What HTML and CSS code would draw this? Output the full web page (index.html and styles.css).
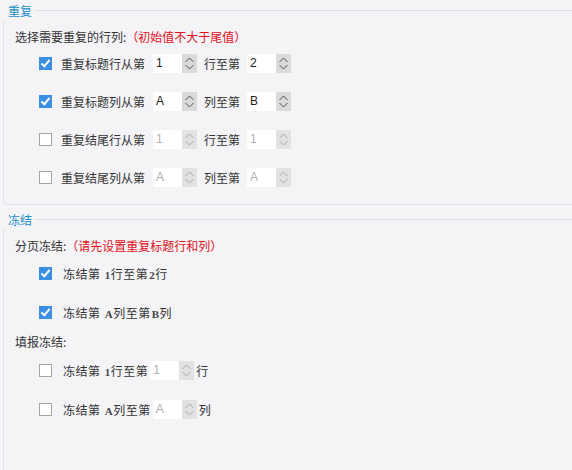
FILE: index.html
```html
<!DOCTYPE html>
<html lang="zh-CN">
<head>
  <meta charset="UTF-8">
  <title>重复与冻结</title>
  <link rel="stylesheet" href="styles.css">
</head>
<body>

<!-- 重复 -->
<div class="section-title"><span>重复</span></div>
<div class="panel panel-repeat">
  <div class="intro">选择需要重复的行列:<span class="note">（初始值不大于尾值）</span></div>

  <div class="row">
    <span class="check on"></span>
    <span class="label">重复标题行从第</span>
    <span class="spin"><span class="val">1</span><span class="arrows"></span></span>
    <span class="label mid">行至第</span>
    <span class="spin"><span class="val">2</span><span class="arrows"></span></span>
  </div>
  <div class="row">
    <span class="check on"></span>
    <span class="label">重复标题列从第</span>
    <span class="spin"><span class="val">A</span><span class="arrows"></span></span>
    <span class="label mid">列至第</span>
    <span class="spin"><span class="val">B</span><span class="arrows"></span></span>
  </div>
  <div class="row">
    <span class="check"></span>
    <span class="label">重复结尾行从第</span>
    <span class="spin off"><span class="val">1</span><span class="arrows"></span></span>
    <span class="label mid">行至第</span>
    <span class="spin off"><span class="val">1</span><span class="arrows"></span></span>
  </div>
  <div class="row">
    <span class="check"></span>
    <span class="label">重复结尾列从第</span>
    <span class="spin off"><span class="val">A</span><span class="arrows"></span></span>
    <span class="label mid">列至第</span>
    <span class="spin off"><span class="val">A</span><span class="arrows"></span></span>
  </div>
</div>

<!-- 冻结 -->
<div class="section-title second"><span>冻结</span></div>
<div class="panel panel-freeze">
  <div class="intro">分页冻结:<span class="note">（请先设置重复标题行和列）</span></div>
  <div class="row">
    <span class="check on"></span>
    <span class="label wide">冻结第 <b class="num">1</b>行至第<b class="num">2</b>行</span>
  </div>
  <div class="row">
    <span class="check on"></span>
    <span class="label wide">冻结第 <b class="num">A</b>列至第<b class="num">B</b>列</span>
  </div>

  <div class="intro sub">填报冻结:</div>
  <div class="row">
    <span class="check"></span>
    <span class="label wide">冻结第 <b class="num">1</b>行至第</span>
    <span class="spin off"><span class="val">1</span><span class="arrows"></span></span>
    <span class="label tail">行</span>
  </div>
  <div class="row">
    <span class="check"></span>
    <span class="label wide">冻结第 <b class="num">A</b>列至第</span>
    <span class="spin off"><span class="val">A</span><span class="arrows"></span></span>
    <span class="label tail">列</span>
  </div>
</div>

</body>
</html>
```

FILE: styles.css
```css
body {
  margin: 0;
  background-color: #f4f4f7;
  font-family: "Noto Sans CJK SC", "Microsoft YaHei", sans-serif;
  font-size: 12px;
  color: #333;
  height: 470px;
  overflow: hidden;
}

.section-title {
  display: flex;
  align-items: center;
  height: 20px;
  padding-left: 8px;
  color: #1c8ec9;
  font-size: 12px;
}

.section-title::after {
  content: "";
  flex: 1;
  height: 1px;
  background-color: #dedee3;
  margin-left: 2px;
}

.section-title.second {
  margin-top: 4px;
}

.panel {
  display: flex;
  flex-direction: column;
  margin-left: 3px;
  border-left: 1px solid #e2e2e6;
  border-bottom: 1px solid #e2e2e6;
  border-bottom-left-radius: 5px;
  padding: 9px 0 0 11px;
  box-sizing: border-box;
}

.panel-repeat {
  height: 185px;
}

.panel-freeze {
  height: 260px;
}

.intro {
  height: 16px;
  line-height: 16px;
  margin-bottom: 9px;
}

.intro.sub {
  margin-top: -7px;
  margin-bottom: 10px;
}

.note {
  color: #e0101a;
}

.row {
  display: flex;
  align-items: center;
  height: 20px;
  margin-bottom: 19px;
  padding-left: 24px;
}

.check {
  width: 11px;
  height: 11px;
  border: 1px solid #a4a4a4;
  background-color: #fff;
  margin-right: 9px;
  position: relative;
}

.check.on {
  border-color: #3a8fe3;
  background-color: #3a8fe3;
}

.check.on::after {
  content: "";
  position: absolute;
  left: 3px;
  top: 0px;
  width: 3px;
  height: 7px;
  border-right: 2px solid #fff;
  border-bottom: 2px solid #fff;
  transform: rotate(40deg);
}

.label {
  width: 92px;
  white-space: nowrap;
}

.label.wide {
  width: auto;
  padding-left: 2px;
  margin-right: 2px;
  letter-spacing: 0.5px;
}

.label.mid {
  width: 43px;
  padding-left: 7px;
}

.label.tail {
  width: auto;
  padding-left: 2px;
}

.num {
  font-family: "Liberation Serif", serif;
  font-weight: bold;
  font-size: 11px;
  color: #444;
  margin-left: 1px;
}

.spin {
  display: flex;
  width: 44px;
  height: 19px;
}

.val {
  flex: 1;
  background-color: #fff;
  font-family: "Liberation Sans", Arial, sans-serif;
  font-size: 12px;
  line-height: 19px;
  padding-left: 3px;
  color: #222;
}

.arrows {
  width: 15px;
  background-color: #dadada;
  background-image: url("data:image/svg+xml,%3Csvg xmlns='http://www.w3.org/2000/svg' width='15' height='19'%3E%3Cpath d='M3.5 8 L7.5 4 L11.5 8 M3.5 11 L7.5 15 L11.5 11' fill='none' stroke='%23505050' stroke-width='1'/%3E%3C/svg%3E");
}

.spin.off .val {
  color: #b0b0b0;
}

.spin.off .arrows {
  background-color: #e2e2e2;
  background-image: url("data:image/svg+xml,%3Csvg xmlns='http://www.w3.org/2000/svg' width='15' height='19'%3E%3Cpath d='M3.5 8 L7.5 4 L11.5 8 M3.5 11 L7.5 15 L11.5 11' fill='none' stroke='%23a8a8a8' stroke-width='1'/%3E%3C/svg%3E");
}
```
